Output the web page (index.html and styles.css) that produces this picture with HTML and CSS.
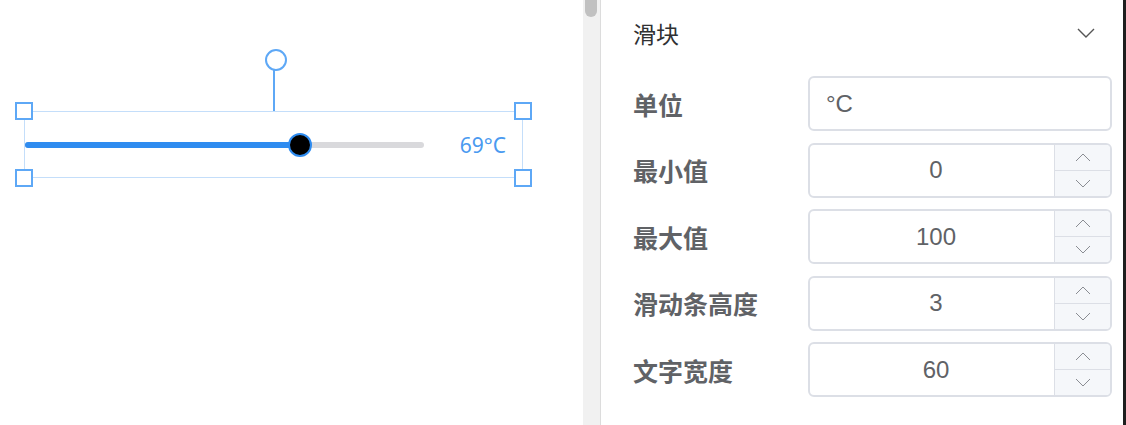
FILE: index.html
```html
<!DOCTYPE html>
<html lang="zh-CN">
<head>
    <meta charset="UTF-8">
    <meta name="viewport" content="width=device-width, initial-scale=1.0">
    <title>滑块 - 属性</title>
    <link rel="stylesheet" href="styles.css">
</head>
<body>
    <div class="editor">
        <div class="canvas">
            <div class="widget">
                <div class="rotate-handle"></div>
                <span class="handle handle-tl"></span>
                <span class="handle handle-tr"></span>
                <span class="handle handle-bl"></span>
                <span class="handle handle-br"></span>
                <div class="slider">
                    <div class="slider-track">
                        <div class="slider-fill" style="width: 69%;"></div>
                        <div class="slider-thumb" style="left: 69%;"></div>
                    </div>
                    <div class="slider-text">69°C</div>
                </div>
            </div>
        </div>

        <div class="scrollbar"><div class="scrollbar-thumb"></div></div>

        <div class="panel">
            <div class="panel-header">
                <span>滑块</span>
                <svg class="chevron" width="18" height="10" viewBox="0 0 18 10">
                    <path d="M1 1 L9 9 L17 1" fill="none" stroke="#555" stroke-width="1.4"/>
                </svg>
            </div>

            <div class="form-row">
                <label>单位</label>
                <div class="input">
                    <input type="text" value="°C">
                </div>
            </div>

            <div class="form-row">
                <label>最小值</label>
                <div class="input input-number">
                    <input type="text" value="0">
                    <div class="spin">
                        <span class="spin-btn"><svg width="16" height="9" viewBox="0 0 16 9"><path d="M1 8 L8 1 L15 8" fill="none" stroke="#8a8d93" stroke-width="1"/></svg></span>
                        <span class="spin-btn"><svg width="16" height="9" viewBox="0 0 16 9"><path d="M1 1 L8 8 L15 1" fill="none" stroke="#8a8d93" stroke-width="1"/></svg></span>
                    </div>
                </div>
            </div>

            <div class="form-row">
                <label>最大值</label>
                <div class="input input-number">
                    <input type="text" value="100">
                    <div class="spin">
                        <span class="spin-btn"><svg width="16" height="9" viewBox="0 0 16 9"><path d="M1 8 L8 1 L15 8" fill="none" stroke="#8a8d93" stroke-width="1"/></svg></span>
                        <span class="spin-btn"><svg width="16" height="9" viewBox="0 0 16 9"><path d="M1 1 L8 8 L15 1" fill="none" stroke="#8a8d93" stroke-width="1"/></svg></span>
                    </div>
                </div>
            </div>

            <div class="form-row">
                <label>滑动条高度</label>
                <div class="input input-number">
                    <input type="text" value="3">
                    <div class="spin">
                        <span class="spin-btn"><svg width="16" height="9" viewBox="0 0 16 9"><path d="M1 8 L8 1 L15 8" fill="none" stroke="#8a8d93" stroke-width="1"/></svg></span>
                        <span class="spin-btn"><svg width="16" height="9" viewBox="0 0 16 9"><path d="M1 1 L8 8 L15 1" fill="none" stroke="#8a8d93" stroke-width="1"/></svg></span>
                    </div>
                </div>
            </div>

            <div class="form-row">
                <label>文字宽度</label>
                <div class="input input-number">
                    <input type="text" value="60">
                    <div class="spin">
                        <span class="spin-btn"><svg width="16" height="9" viewBox="0 0 16 9"><path d="M1 8 L8 1 L15 8" fill="none" stroke="#8a8d93" stroke-width="1"/></svg></span>
                        <span class="spin-btn"><svg width="16" height="9" viewBox="0 0 16 9"><path d="M1 1 L8 8 L15 1" fill="none" stroke="#8a8d93" stroke-width="1"/></svg></span>
                    </div>
                </div>
            </div>
        </div>

        <div class="edge"></div>
    </div>
</body>
</html>
```

FILE: styles.css
```css
* {
    margin: 0;
    padding: 0;
    box-sizing: border-box;
}

body {
    background: #ffffff;
    font-family: "Liberation Sans", "Noto Sans CJK SC", sans-serif;
    overflow: hidden;
}

.editor {
    display: flex;
    height: 425px;
}

/* canvas */
.canvas {
    position: relative;
    width: 583px;
    flex-shrink: 0;
    background: #ffffff;
}

.widget {
    position: absolute;
    left: 24px;
    top: 111px;
    width: 499px;
    height: 67px;
    border: 1px solid #c4defa;
}

.rotate-handle {
    position: absolute;
    left: 248px;
    top: -46px;
    width: 2px;
    height: 45px;
    background: #5ea8f6;
}

.rotate-handle::before {
    content: "";
    position: absolute;
    left: -8px;
    top: -17px;
    width: 18px;
    height: 18px;
    border: 2px solid #5ea8f6;
    border-radius: 50%;
    background: #ffffff;
}

.handle {
    position: absolute;
    width: 18px;
    height: 18px;
    border: 2px solid #5ea8f6;
    background: #ffffff;
}

.handle-tl { left: -10px; top: -10px; }
.handle-tr { right: -10px; top: -10px; }
.handle-bl { left: -10px; bottom: -10px; }
.handle-br { right: -10px; bottom: -10px; }

.slider {
    display: flex;
    align-items: center;
    height: 100%;
}

.slider-track {
    position: relative;
    width: 399px;
    height: 6px;
    border-radius: 3px;
    background: #d9d9dc;
}

.slider-fill {
    height: 100%;
    border-radius: 3px;
    background: #2f8cf0;
}

.slider-thumb {
    position: absolute;
    top: 50%;
    width: 24px;
    height: 24px;
    margin: -12px 0 0 -12px;
    border: 2px solid #2f8cf0;
    border-radius: 50%;
    background: #000000;
}

.slider-text {
    flex: 1;
    padding-right: 16px;
    text-align: right;
    font-family: "Noto Sans", sans-serif;
    font-size: 21px;
    color: #4a9af0;
}

/* scrollbar */
.scrollbar {
    width: 18px;
    flex-shrink: 0;
    background: #f1f1f1;
    border-right: 1px solid #dcdcdc;
    padding: 0 3px 0 2px;
}

.scrollbar-thumb {
    height: 17px;
    background: #c1c1c1;
    border-radius: 0 0 6px 6px;
}

/* property panel */
.panel {
    flex: 1;
    min-width: 0;
    padding: 0 11px 0 32px;
}

.panel-header {
    display: flex;
    align-items: center;
    justify-content: space-between;
    height: 66px;
    padding-right: 17px;
    font-size: 23px;
    color: #303133;
}

.chevron {
    display: block;
}

.form-row {
    display: flex;
    align-items: center;
    margin-top: 10px;
}

.form-row + .form-row {
    margin-top: 11.5px;
}

.form-row label {
    width: 175px;
    flex-shrink: 0;
    font-size: 25px;
    font-weight: bold;
    color: #606266;
}

.input {
    display: flex;
    flex: 1;
    min-width: 0;
    height: 55px;
    border: 2px solid #dcdfe6;
    border-radius: 6px;
    overflow: hidden;
    background: #ffffff;
}

.input input {
    flex: 1;
    min-width: 0;
    width: 0;
    border: none;
    outline: none;
    padding: 0 16px;
    font-family: "Liberation Sans", sans-serif;
    font-size: 24px;
    color: #606266;
    background: transparent;
}

.input-number input {
    text-align: center;
    padding: 0 0 0 8px;
}

.spin {
    display: flex;
    flex-direction: column;
    width: 56px;
    flex-shrink: 0;
    border-left: 1px solid #dcdfe6;
    background: #f5f7fa;
}

.spin-btn {
    display: flex;
    flex: 1;
    align-items: center;
    justify-content: center;
}

.spin-btn + .spin-btn {
    border-top: 1px solid #dcdfe6;
}

.edge {
    width: 3px;
    flex-shrink: 0;
    background: #1e1e1e;
}
```
